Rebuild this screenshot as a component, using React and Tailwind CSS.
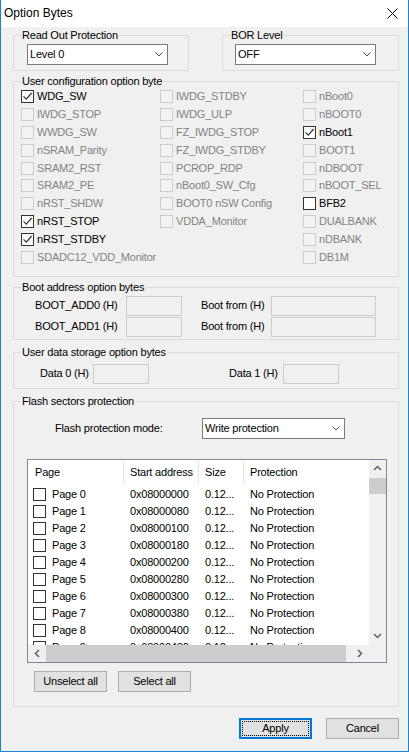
import React from "react";

const col1 = [
  ["WDG_SW", true, true],
  ["IWDG_STOP"],
  ["WWDG_SW"],
  ["nSRAM_Parity"],
  ["SRAM2_RST"],
  ["SRAM2_PE"],
  ["nRST_SHDW"],
  ["nRST_STOP", true, true],
  ["nRST_STDBY", true, true],
  ["SDADC12_VDD_Monitor"],
];

const col2 = [
  ["IWDG_STDBY"],
  ["IWDG_ULP"],
  ["FZ_IWDG_STOP"],
  ["FZ_IWDG_STDBY"],
  ["PCROP_RDP"],
  ["nBoot0_SW_Cfg"],
  ["BOOT0 nSW Config"],
  ["VDDA_Monitor"],
];

const col3 = [
  ["nBoot0"],
  ["nBOOT0"],
  ["nBoot1", true, true],
  ["BOOT1"],
  ["nDBOOT"],
  ["nBOOT_SEL"],
  ["BFB2", false, true],
  ["DUALBANK"],
  ["nDBANK"],
  ["DB1M"],
];

const pages = Array.from({ length: 10 }, (_, i) => ({
  name: "Page " + i,
  addr: "0x" + (0x08000000 + i * 0x80).toString(16).padStart(8, "0").toUpperCase(),
}));

const Check = ({ checked, enabled }) => (
  <span
    className={`block w-[13px] h-[13px] flex-none border ${
      enabled ? "border-[#333333] bg-white" : "border-[#cccccc] bg-[#f3f3f3]"
    }`}
  >
    {checked && (
      <svg width="11" height="11" viewBox="0 0 11 11" className="block">
        <polyline points="1.5,5.3 4.3,8.1 9.6,2" fill="none" stroke="#333333" strokeWidth="1.2" />
      </svg>
    )}
  </span>
);

const Chevron = () => (
  <svg width="8" height="5" viewBox="0 0 8 5" className="block">
    <polyline points="0.5,0.5 4,4 7.5,0.5" fill="none" stroke="#4a4a4a" strokeWidth="1" />
  </svg>
);

const Combo = ({ value, className }) => (
  <div
    className={`h-[21px] bg-white border border-[#7a7a7a] flex items-center justify-between pl-[2px] pr-[4px] ${className}`}
  >
    <span>{value}</span>
    <Chevron />
  </div>
);

const Edit = ({ className }) => (
  <div className={`h-[20px] border border-[#cccccc] bg-[#f0f0f0] flex-none ${className}`} />
);

const Group = ({ title, className, children }) => (
  <fieldset className={`border border-[#dcdcdc] pl-[7px] ${className}`}>
    <legend className="px-[1px] leading-[13px]">{title}</legend>
    {children}
  </fieldset>
);

const Button = ({ children, className }) => (
  <button className={`w-[73px] h-[21px] bg-[#e1e1e1] border border-[#adadad] flex items-center justify-center ${className}`}>
    {children}
  </button>
);

const OptionColumn = ({ items, width }) => (
  <div className={`flex flex-col flex-none ${width}`}>
    {items.map(([label, checked, enabled]) => (
      <div key={label} className="h-[17.8px] flex items-center">
        <Check checked={checked} enabled={enabled} />
        <span className={`ml-[3px] leading-[13px] whitespace-nowrap ${enabled ? "text-black" : "text-[#838383]"}`}>
          {label}
        </span>
      </div>
    ))}
  </div>
);

export default function App() {
  return (
    <div className="w-[409px] h-[752px] bg-[#f0f0f0] border-x border-b border-[#1883d7] flex flex-col text-[11px] leading-[13px] text-black tracking-[-0.2px] font-['Liberation_Sans',Arial,sans-serif]">
      {/* title bar */}
      <div className="h-[27px] bg-white flex items-center justify-between pl-[3px] pr-[10px] flex-none">
        <span className="text-[12px] tracking-normal">Option Bytes</span>
        <svg width="11" height="11" viewBox="0 0 11 11" className="block">
          <path d="M0.5 0.5 L10.5 10.5 M10.5 0.5 L0.5 10.5" stroke="#000" strokeWidth="1" />
        </svg>
      </div>

      <div className="flex ml-[12px] mt-[2px] gap-[33px]">
        <Group title="Read Out Protection" className="w-[176px] pt-[2px] pb-[5px]">
          <Combo value="Level 0" className="ml-[6px] w-[141px]" />
        </Group>
        <Group title="BOR Level" className="w-[177px] pt-[2px] pb-[5px]">
          <Combo value="OFF" className="ml-[5px] w-[141px]" />
        </Group>
      </div>

      <Group title="User configuration option byte" className="ml-[12px] mt-[4px] w-[386px] pb-[10px]">
        <div className="flex">
          <OptionColumn items={col1} width="w-[139px]" />
          <OptionColumn items={col2} width="w-[143px]" />
          <OptionColumn items={col3} width="w-[80px]" />
        </div>
      </Group>

      <Group title="Boot address option bytes" className="ml-[12px] mt-[4px] w-[386px] pt-[2px] pb-[2px]">
        <div className="flex flex-col gap-[1px]">
          {["BOOT_ADD0 (H)", "BOOT_ADD1 (H)"].map((l) => (
            <div key={l} className="flex items-center">
              <span className="ml-[14px] w-[91px] flex-none">{l}</span>
              <Edit className="w-[56px]" />
              <span className="ml-[19px] w-[70px] flex-none">Boot from (H)</span>
              <Edit className="w-[105px]" />
            </div>
          ))}
        </div>
      </Group>

      <Group title="User data storage option bytes" className="ml-[12px] mt-[6px] w-[386px] pt-[5px] pb-[4px]">
        <div className="flex items-center">
          <span className="ml-[19px] w-[53px] flex-none">Data 0 (H)</span>
          <Edit className="w-[56px]" />
          <span className="ml-[80px] w-[54px] flex-none">Data 1 (H)</span>
          <Edit className="w-[56px]" />
        </div>
      </Group>

      <Group title="Flash sectors protection" className="ml-[12px] mt-[6px] w-[386px] pt-[10px] pb-[14px]">
        <div className="flex items-center">
          <span className="ml-[34px] w-[147px] flex-none">Flash protection mode:</span>
          <Combo value="Write protection" className="w-[143px]" />
        </div>

        <div className="ml-[6px] mt-[20px] w-[360px] h-[204px] border border-[#828790] flex flex-col">
          <div className="flex h-[185px]">
            <div className="flex-1 bg-white overflow-hidden">
              <div className="h-[26px] flex items-center">
                <span className="w-[95px] pl-[7px] flex-none">Page</span>
                <span className="w-px h-[23px] bg-[#e5e5e5] flex-none" />
                <span className="w-[74px] pl-[6px] flex-none whitespace-nowrap">Start address</span>
                <span className="w-px h-[23px] bg-[#e5e5e5] flex-none" />
                <span className="w-[44px] pl-[6px] flex-none">Size</span>
                <span className="w-px h-[23px] bg-[#e5e5e5] flex-none" />
                <span className="pl-[6px]">Protection</span>
              </div>
              {pages.map((p) => (
                <div key={p.name} className="h-[17px] flex items-center whitespace-nowrap">
                  <div className="w-[96px] flex items-center flex-none">
                    <span className="ml-[5px]">
                      <Check enabled />
                    </span>
                    <span className="ml-[6px]">{p.name}</span>
                  </div>
                  <span className="w-[75px] pl-[6px] flex-none">{p.addr}</span>
                  <span className="w-[45px] pl-[6px] flex-none">0.12...</span>
                  <span className="pl-[6px]">No Protection</span>
                </div>
              ))}
            </div>
            <div className="w-[17px] bg-[#f0f0f0] flex flex-col flex-none">
              <div className="h-[17px] flex items-center justify-center">
                <svg width="9" height="6" viewBox="0 0 9 6" className="block">
                  <polyline points="1,5 4.5,1.5 8,5" fill="none" stroke="#606060" strokeWidth="1.5" />
                </svg>
              </div>
              <div className="mt-[1px] h-[16px] bg-[#cdcdcd]" />
              <div className="flex-1" />
              <div className="h-[17px] flex items-center justify-center">
                <svg width="9" height="6" viewBox="0 0 9 6" className="block">
                  <polyline points="1,1 4.5,4.5 8,1" fill="none" stroke="#606060" strokeWidth="1.5" />
                </svg>
              </div>
            </div>
          </div>
          <div className="flex h-[17px] bg-[#f0f0f0]">
            <div className="w-[17px] flex items-center justify-center flex-none">
              <svg width="6" height="9" viewBox="0 0 6 9" className="block">
                <polyline points="5,1 1.5,4.5 5,8" fill="none" stroke="#606060" strokeWidth="1.5" />
              </svg>
            </div>
            <div className="ml-[1px] w-[300px] bg-[#cdcdcd] flex-none" />
            <div className="flex-1" />
            <div className="w-[17px] flex items-center justify-center flex-none">
              <svg width="6" height="9" viewBox="0 0 6 9" className="block">
                <polyline points="1,1 4.5,4.5 1,8" fill="none" stroke="#606060" strokeWidth="1.5" />
              </svg>
            </div>
            <div className="w-[18px] flex-none" />
          </div>
        </div>

        <div className="flex mt-[8px] ml-[13px] gap-[11px]">
          <Button>Unselect all</Button>
          <Button>Select all</Button>
        </div>
      </Group>

      <div className="flex justify-end mt-[11px] mr-[9px] gap-[14px]">
        <button className="w-[73px] h-[21px] bg-[#e1e1e1] border-2 border-[#0078d7] p-[1px] flex">
          <span className="flex-1 border border-dotted border-black flex items-center justify-center">
            Apply
          </span>
        </button>
        <Button>Cancel</Button>
      </div>
    </div>
  );
}
